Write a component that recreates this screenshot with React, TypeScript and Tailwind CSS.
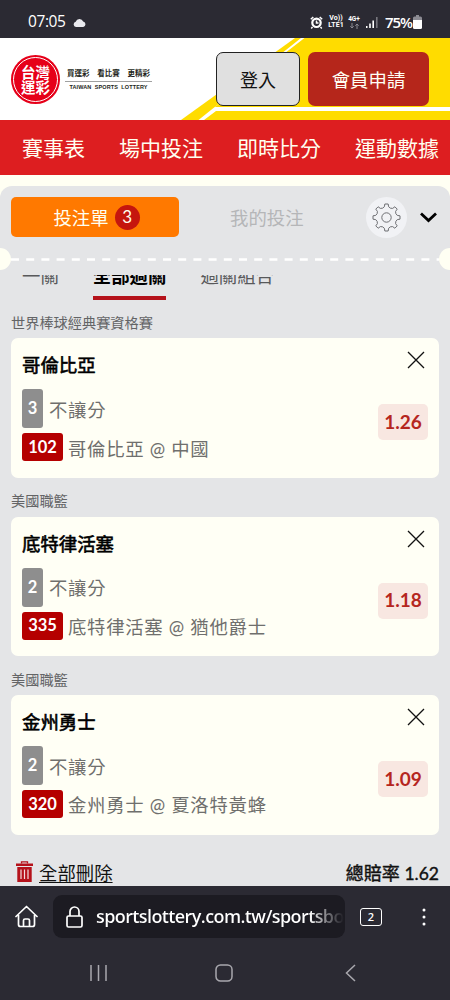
import React from "react";
import { clsx } from "clsx";

interface Bet {
  league: string;
  pick: string;
  count: number;
  code: string;
  match: string;
  odds: string;
}

const NAV_ITEMS = ["賽事表", "場中投注", "即時比分", "運動數據"];

const BETS: Bet[] = [
  { league: "世界棒球經典賽資格賽", pick: "哥倫比亞", count: 3, code: "102", match: "哥倫比亞 @ 中國", odds: "1.26" },
  { league: "美國職籃", pick: "底特律活塞", count: 2, code: "335", match: "底特律活塞 @ 猶他爵士", odds: "1.18" },
  { league: "美國職籃", pick: "金州勇士", count: 2, code: "320", match: "金州勇士 @ 夏洛特黃蜂", odds: "1.09" },
];

function StatusBar() {
  return (
    <div className="flex h-[38px] shrink-0 items-center bg-[#2b2a33] pl-[28px] pr-[28px] pt-[6px] text-white">
      <span className="w-[39px] font-['Open_Sans'] text-[15.5px] font-medium leading-none tracking-[-0.4px]">07:05</span>
      <svg className="ml-[6px] h-[9px] w-[13px]" viewBox="0 0 13 9" fill="#e9e9ee">
        <path d="M3 9a2.7 2.7 0 0 1-.3-5.3A4 4 0 0 1 10.2 3.5 2.8 2.8 0 0 1 10.2 9z" />
      </svg>
      <div className="ml-auto flex items-center">
        <svg className="h-[13px] w-[13px]" viewBox="0 0 13 13" fill="none" stroke="#fff">
          <circle cx="6.5" cy="6.8" r="4.2" strokeWidth="2.2" />
          <path d="M6.5 4.5v2.5h2M.8 3.2 3.3 1M12.2 3.2 9.7 1M2.5 11l-1.3 1.4M10.5 11l1.3 1.4" strokeWidth="1.5" />
        </svg>
        <div className="ml-[4px] w-[18px] whitespace-nowrap text-center font-['Roboto'] text-[7px] font-bold leading-[7px]">
          <div>Vo))</div>
          <div>LTE1</div>
        </div>
        <div className="ml-[2px] w-[14px] whitespace-nowrap text-center font-['Roboto'] text-[6.5px] font-bold leading-[7px]">
          <div>4G+</div>
          <svg className="mx-auto h-[6px] w-[9px]" viewBox="0 0 9 6" fill="none" stroke="#8c8b93">
            <path d="M2 0v5M.3 3.3 2 5l1.7-1.7M7 6V1M5.3 2.7 7 1l1.7 1.7" />
          </svg>
        </div>
        <svg className="ml-[5px] h-[12px] w-[12px]" viewBox="0 0 12 12" fill="#fff">
          <path d="M0 10h1.5v2H0zM3.2 7.5h1.6V12H3.2zM6.4 4.5H8V12H6.4z" />
          <path d="M10 1h1.6v11H10z" fill="#77767e" />
        </svg>
        <span className="ml-[7px] w-[27px] font-['Open_Sans'] text-[15px] font-semibold leading-none tracking-[-1.1px]">75%</span>
        <svg className="ml-[1px] h-[14px] w-[9px]" viewBox="0 0 9 14">
          <path d="M3 0h3v1.5h1.5Q9 1.5 9 3v3H0V3q0-1.5 1.5-1.5H3z" fill="#8c8b93" />
          <path d="M0 5h9v7.5q0 1.5-1.5 1.5h-6Q0 14 0 12.5z" fill="#fff" />
        </svg>
      </div>
    </div>
  );
}

function Logo() {
  return (
    <div className="flex items-center">
      <div className="flex h-[49px] w-[49px] items-center justify-center rounded-full bg-[#e60019]">
        <div className="flex h-[45px] w-[45px] items-center justify-center rounded-full border border-white pt-[2px] text-center text-[14.5px] font-bold leading-[15px] text-white">
          台灣
          <br />
          運彩
        </div>
      </div>
      <div className="ml-[5px] w-[87px] text-center text-[#231f20]">
        <div className="flex justify-between border-b border-[#a0a0a0] px-[2px] pb-[2px] text-[7.5px] font-bold leading-[11px]">
          <span>買運彩</span>
          <span>看比賽</span>
          <span>更精彩</span>
        </div>
        <div className="whitespace-nowrap pt-px font-['Liberation_Sans'] text-[5.5px] font-bold leading-[8px] tracking-[0.12px]">
          TAIWAN&nbsp; SPORTS&nbsp; LOTTERY
        </div>
      </div>
    </div>
  );
}

function Header() {
  return (
    <header className="relative flex h-[82px] shrink-0 items-center bg-white pl-[11px] pr-[21px]">
      <svg className="absolute inset-0 h-full w-full" viewBox="0 0 450 82">
        <path d="M295 0H450V82H181z" fill="#ffdc00" />
        <path d="M301 0h3.5L215 69H450v4H216L204 82h-5.5z" fill="#fff" />
      </svg>
      <div className="relative flex w-full items-center">
        <Logo />
        <button type="button" className="ml-auto h-[54px] w-[84px] rounded-[7px] border border-[#222] bg-[#e0e0e0] pt-[3px] text-[18px] text-[#111]">
          登入
        </button>
        <button type="button" className="ml-[8px] h-[54px] w-[121px] rounded-[7px] bg-[#b5261b] pt-[4px] text-[18.4px] text-[#fffff5]">
          會員申請
        </button>
      </div>
    </header>
  );
}

const GEAR_TEETH = [0, 45, 90, 135, 180, 225, 270, 315];

function polar(radius: number, degrees: number) {
  const rad = (degrees * Math.PI) / 180;
  return `${(14.5 + radius * Math.sin(rad)).toFixed(2)} ${(14.5 - radius * Math.cos(rad)).toFixed(2)}`;
}

// eight flat teeth joined by concave arcs
const GEAR_PATH =
  `M${polar(13.6, -7)}` +
  GEAR_TEETH.map(
    (a) => `L${polar(13.6, a + 7)}L${polar(11, a + 11)}A4.2 4.2 0 0 0 ${polar(11, a + 34)}L${polar(13.6, a + 38)}`,
  ).join("") +
  "Z";

function Gear() {
  return (
    <svg className="h-[29px] w-[29px]" viewBox="0 0 29 29" fill="none" stroke="#6d6e72" strokeLinejoin="round">
      <circle cx="14.5" cy="14.5" r="4.7" />
      <path d={GEAR_PATH} />
    </svg>
  );
}

function SlipHeader() {
  return (
    <div className="flex h-[40px] items-center pl-[11px] pr-[13px]">
      <button type="button" className="flex h-[40px] w-[168px] items-center justify-center gap-[6px] rounded-[5px] bg-[#ff7900] pl-[3px] text-[18.4px] text-[#fffff0]">
        <span className="pt-[3px]">投注單</span>
        <span className="flex h-[25px] w-[25px] items-center justify-center rounded-full bg-[#c5160e] font-['Lato'] text-[17px]">3</span>
      </button>
      <span className="ml-[51px] pt-[3px] text-[18.4px] text-[#b5b6b8]">我的投注</span>
      <div className="ml-auto flex h-[41px] w-[41px] items-center justify-center rounded-full bg-[#f1f2f5]">
        <Gear />
      </div>
      <svg className="ml-[13px] h-[11px] w-[17px]" viewBox="0 0 17 11" fill="none" stroke="#000" strokeWidth="2.8">
        <path d="m1 1.5 7.5 7 7.5-7" />
      </svg>
    </div>
  );
}

// ticket perforation between the slip header and its body
function Perforation() {
  return (
    <div className="mt-[11px] flex h-[22px] items-center justify-between overflow-hidden">
      <div className="h-[22px] w-[11px] rounded-r-full bg-[#fffff3]" />
      <svg className="h-[3px] w-[428px]" viewBox="0 0 428 3">
        <path d="M0 1.5h428" stroke="#fff" strokeWidth="2.6" strokeDasharray="8 7.2" />
      </svg>
      <div className="h-[22px] w-[11px] rounded-l-full bg-[#fffff3]" />
    </div>
  );
}

function ParlayTabs() {
  const tabs = ["一關", "全部過關", "過關組合"];
  return (
    <div className="mt-[5px] flex h-[25px] items-end gap-[34px] overflow-hidden pl-[22px] text-[18.4px]">
      {tabs.map((tab, i) => (
        <div
          key={tab}
          className={clsx(
            "h-[37px] shrink-0 border-b-[4px] leading-[26px]",
            i === 1 ? "border-[#b5121b] font-bold text-black" : "border-transparent text-[#58595b]",
          )}
        >
          {tab}
        </div>
      ))}
    </div>
  );
}

function BetCard({ bet }: { bet: Bet }) {
  return (
    <section className="h-[178.4px] px-[11px]">
      <h3 className="h-[38.3px] pt-[12px] text-[14.2px] leading-[21px] text-[#636466]">{bet.league}</h3>
      <div className="flex h-[139.5px] justify-between rounded-[7px] bg-[#fffff5] px-[11px]">
        <div>
          <div className="mt-[14px] text-[18.4px] leading-[26px] text-black [-webkit-text-stroke:0.6px_#000]">{bet.pick}</div>
          <div className="mt-[11px] flex h-[39px] items-center gap-[6px]">
            <span className="flex h-[39px] w-[21px] items-center justify-center rounded-[3px] bg-[#8e8e8e] font-['Lato'] text-[16.5px] font-bold text-white">
              {bet.count}
            </span>
            <span className="pt-[4px] text-[18.4px] tracking-[0.7px] text-[#6f6f6d]">不讓分</span>
          </div>
          <div className="mt-[5px] flex h-[28px] items-center gap-[5px]">
            <span className="flex h-[28px] w-[41px] items-center justify-center rounded-[3px] bg-[#b50000] font-['Lato'] text-[16.5px] font-bold text-white">
              {bet.code}
            </span>
            <span className="whitespace-nowrap pt-[4px] text-[18.4px] tracking-[0.7px] text-[#6f6f6d]">{bet.match}</span>
          </div>
        </div>
        <div className="flex flex-col items-end">
          <button type="button" aria-label="移除" className="mr-[3px] mt-[13px]">
            <svg className="h-[18px] w-[18px]" viewBox="0 0 18 18" stroke="#111" strokeWidth="1.3">
              <path d="m1 1 16 16M17 1 1 17" />
            </svg>
          </button>
          <span className="mt-[35px] flex h-[36px] w-[50px] items-center justify-center rounded-[5px] bg-[#f8e7e1] font-['Lato'] text-[19px] font-bold text-[#b5261e]">
            {bet.odds}
          </span>
        </div>
      </div>
    </section>
  );
}

function SlipFooter() {
  return (
    <div className="flex h-[51px] items-center justify-between pl-[16px] pr-[11px] pt-[26px] text-[18.4px] text-[#111]">
      <div className="flex items-center">
        <svg className="mb-[5px] h-[21px] w-[17px]" viewBox="0 0 17 21">
          <path d="M5.5 2.5V.8h6v1.7" fill="none" stroke="#b5121b" strokeWidth="1.3" />
          <path d="M0 2.5h17v2.5H0zM1.3 6h14.4v15H1.3z" fill="#b5121b" />
          <path d="M5 8.5v9.5M8.5 8.5v9.5M12 8.5v9.5" stroke="#f3dede" strokeWidth="1.2" />
        </svg>
        <span className="ml-[6px] underline decoration-1 underline-offset-[2px]">全部刪除</span>
      </div>
      <span className="text-[18px] [-webkit-text-stroke:0.4px_#111]">
        總賠率 <span className="font-['Lato'] text-[17.5px]">1.62</span>
      </span>
    </div>
  );
}

function BrowserBar() {
  return (
    <div className="flex h-[114px] shrink-0 flex-col bg-[#2b2a33] text-white">
      <div className="flex items-center pl-[15px] pr-[24px] pt-[9px]">
        <svg className="h-[23px] w-[23px]" viewBox="0 0 23 23" fill="none" stroke="#fff" strokeWidth="1.7" strokeLinejoin="round" strokeLinecap="round">
          <path d="M1 11.5 11.5 1.5 22 11.5M3.5 10v9.5q0 2 2 2h12q2 0 2-2V10M8.5 21v-5.5q0-1.5 1.5-1.5h3q1.5 0 1.5 1.5V21" />
        </svg>
        <div className="ml-[15px] flex h-[43px] w-[292px] items-center overflow-hidden rounded-[9px] bg-[#1c1b22] pl-[13px]">
          <svg className="h-[22px] w-[17px] shrink-0" viewBox="0 0 17 22" fill="none" stroke="#fff" strokeWidth="1.7">
            <path d="M4 10V5.5a4.5 4.5 0 0 1 9 0V10" />
            <rect x="1" y="10" width="15" height="11" rx="1.5" />
          </svg>
          <span className="ml-[13px] w-[248px] overflow-hidden whitespace-nowrap bg-linear-to-r from-white from-[86%] to-[#1c1b22] bg-clip-text font-['Open_Sans'] text-[18px] font-semibold tracking-[-0.6px] text-transparent">
            sportslottery.com.tw/sportsbook
          </span>
        </div>
        <div className="ml-[15px] flex h-[18px] w-[22px] items-center justify-center rounded-[3px] border-[1.5px] border-white font-['Open_Sans'] text-[11px] font-semibold leading-none">
          2
        </div>
        <svg className="ml-auto h-[18px] w-[4px]" viewBox="0 0 4 18" fill="#fff">
          <circle cx="2" cy="2" r="1.5" />
          <circle cx="2" cy="9" r="1.5" />
          <circle cx="2" cy="16" r="1.5" />
        </svg>
      </div>
      <div className="flex items-center justify-between pl-[90px] pr-[94px] pt-[26px] text-[#a9a8ae]">
        <svg className="h-[18px] w-[17px]" viewBox="0 0 17 18" stroke="currentColor" strokeWidth="1.5">
          <path d="M1 1v16M8.5 1v16M16 1v16" />
        </svg>
        <svg className="mr-[5px] h-[18px] w-[18px]" viewBox="0 0 18 18" fill="none" stroke="currentColor" strokeWidth="1.5">
          <rect x="1" y="1" width="16" height="16" rx="4.5" />
        </svg>
        <svg className="h-[18px] w-[11px]" viewBox="0 0 11 18" fill="none" stroke="currentColor" strokeWidth="1.5">
          <path d="M10 1 1.5 9l8.5 8" />
        </svg>
      </div>
    </div>
  );
}

export default function App() {
  return (
    <div className="flex h-[1000px] w-[450px] flex-col overflow-hidden bg-[#fffff3] font-['Lato','Noto_Sans_CJK_TC',sans-serif]">
      <StatusBar />
      <Header />
      <nav className="flex h-[55px] shrink-0 items-center gap-[34px] whitespace-nowrap bg-[#dd1e20] pl-[22px] pt-px text-[21px] text-[#fffff0]">
        {NAV_ITEMS.map((item) => (
          <span key={item}>{item}</span>
        ))}
      </nav>
      <main className="mt-[11px] h-[700px] shrink-0 overflow-hidden rounded-t-[12px] bg-[#e4e5e7] pt-[11px]">
        <SlipHeader />
        <Perforation />
        <ParlayTabs />
        {BETS.map((bet) => (
          <BetCard key={bet.code} bet={bet} />
        ))}
        <SlipFooter />
      </main>
      <BrowserBar />
    </div>
  );
}
